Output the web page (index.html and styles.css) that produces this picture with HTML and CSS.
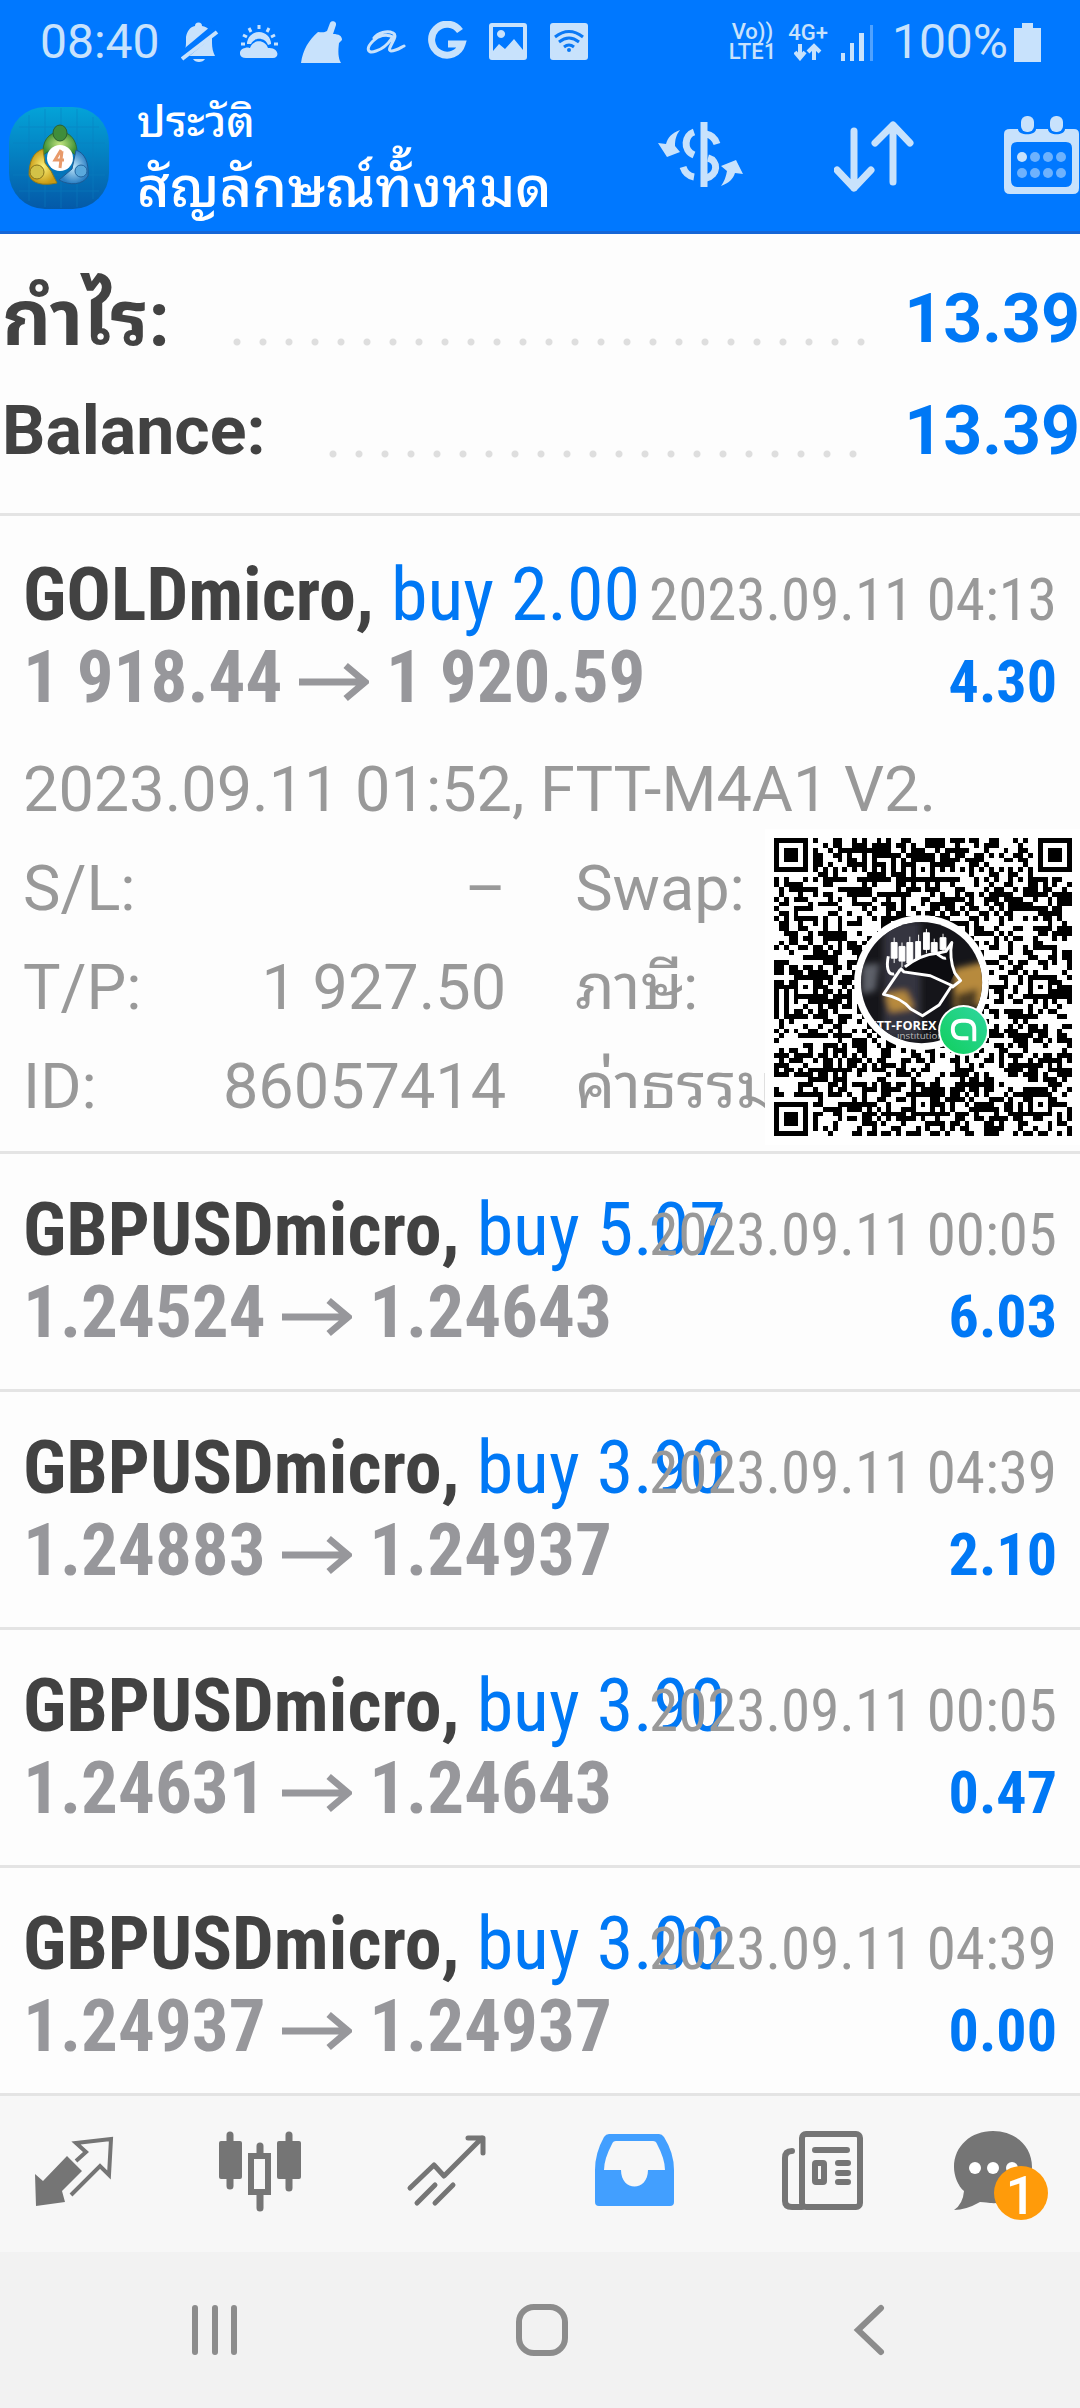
FILE: index.html
```html
<!DOCTYPE html>
<html lang="th">
<head>
<meta charset="utf-8">
<meta name="viewport" content="width=device-width, initial-scale=1">
<title>ประวัติ</title>
<link rel="stylesheet" href="styles.css">
</head>
<body>
<div class="app">
  <header class="top">
    <div class="status">
      <div class="status-left">
        <span class="clock">08:40</span>
        <svg width="38" height="42" viewBox="182 20 38 42" aria-hidden="true"><path fill="currentColor" d="M196 25a3 3 0 0 1 7 0c6 1 9 5 10 10v7c0 5 1 9 3 13h-33c3-5 4-9 4-13v-6c1-6 4-10 9-11zM194 58h12c-2 4-10 4-12 0z"/><path stroke="#0078ff" stroke-width="9" d="M182 56l36-30"/><path stroke="currentColor" stroke-width="4" d="M183 58l35-27"/></svg>
        <svg width="40" height="42" viewBox="243 20 40 42" aria-hidden="true"><g fill="none" stroke="currentColor" stroke-width="3"><path d="M262 24v4M252 27l2 4M272 27l-2 4M246 34l4 2M278 34l-4 2M244 43h4M277 43h4"/></g><path fill="currentColor" d="M250 43a12 12 0 0 1 24 0l-3 1c-3-8-14-8-17-1zM249 57c-8 0-8-9-1-10 3-1 4 0 5 0 3-9 15-9 18 0 11-1 12 10 5 10z"/></svg>
        <svg width="42" height="44" viewBox="304 19 42 44" aria-hidden="true"><path fill="currentColor" d="M333 22c1-3 7-2 6 2l-3 9c6 0 9 2 9 6l-3 3c-1 8-1 15 2 20h-40c2-14 8-23 17-31 3 0 6 1 9-1z"/></svg>
        <svg width="42" height="42" viewBox="362 20 42 42" aria-hidden="true"><path fill="none" stroke="currentColor" stroke-width="3" stroke-linecap="round" d="M372 37c4-5 13-8 19-5 7 3-8 17-2 18 5 0 9-3 13-5M391 36c-7-4-15-1-20 4-8 8-5 13 3 10 7-2 12-7 16-13"/></svg>
        <svg width="40" height="42" viewBox="427 20 40 42" aria-hidden="true"><path fill="none" stroke="currentColor" stroke-width="7" d="M460 30a15.500 15.500 0 1 0 2 13h-14"/></svg>
        <svg width="40" height="42" viewBox="489 20 40 42" aria-hidden="true"><path fill="currentColor" fill-rule="evenodd" d="M493 22h32q3 0 3 3v31q0 3-3 3h-32q-3 0-3-3V25q0-3 3-3zM494 26v24l6-7 6 5 9-10 9 11V26zM502 29a4 4 0 1 0 .1 0z"/></svg>
        <svg width="40" height="42" viewBox="550 20 40 42" aria-hidden="true"><rect x="551" y="22" width="38" height="37" rx="3" fill="currentColor"/><g fill="none" stroke="#0a79f5" stroke-width="3"><path d="M556 36q14-11 28 0M560 41q10-8 20 0M565 46q5-4 10 0"/></g><circle cx="570" cy="49" r="2" fill="#0a79f5"/></svg>
      </div>
      <div class="status-right">
        <span class="mini"><span>Vo))</span><span>LTE1</span></span>
        <span class="mini"><span>4G+</span>
          <svg width="28" height="18" viewBox="795 45 28 18" aria-hidden="true"><path fill="none" stroke="currentColor" stroke-width="4" d="M801 46v13M796 54l5 6 5-6M815 62V49M809 54l6-6 6 6"/></svg>
        </span>
        <svg width="36" height="40" viewBox="841 21 36 40" aria-hidden="true"><g fill="currentColor"><path d="M842 52h4v8h-4zM851 42h4v18h-4zM860 32h5v28h-5z"/><path opacity=".4" d="M871 24h3v36h-3z"/></g></svg>
        <span class="percent">100%</span>
        <svg class="battery" width="28" height="40" viewBox="1015 20 28 40" aria-hidden="true"><path fill="currentColor" d="M1023 21h11v5h8v34h-27V26h8z"/></svg>
      </div>
    </div>
    <div class="bar">
      <svg class="logo" width="100" height="102" viewBox="0 0 100 102" role="img" aria-label="MetaTrader 4">
        <defs>
          <linearGradient id="sea" x1="0" y1="0" x2="0" y2="1"><stop offset="0" stop-color="#04a3d8"/><stop offset="1" stop-color="#0459a8"/></linearGradient>
          <radialGradient id="gr"><stop offset="0" stop-color="#c5e582"/><stop offset="1" stop-color="#3c8f32"/></radialGradient>
          <radialGradient id="ye"><stop offset="0" stop-color="#fdf37a"/><stop offset="1" stop-color="#c99a14"/></radialGradient>
          <radialGradient id="bl"><stop offset="0" stop-color="#bfe6fa"/><stop offset="1" stop-color="#2a7fc4"/></radialGradient>
        </defs>
        <rect width="100" height="102" rx="36" fill="url(#sea)"/>
        <path d="M10 20h80M4 36h92M2 52h96M4 68h92M10 84h80M20 8v86M36 2v98M52 1v100M68 2v98M84 10v82" stroke="#0b7fbe" stroke-width="1" opacity=".5"/>
        <path fill="url(#gr)" stroke="#2f6d38" d="M51 25c12 0 18 11 17 24L58 42H43l-9 6c-1-13 5-23 17-23z"/>
        <path fill="url(#ye)" stroke="#8d7a1c" d="M34 42c-10 3-14 13-14 26 3 9 14 11 28 8l-6-12-6-8z"/>
        <path fill="url(#bl)" stroke="#1d5a94" d="M67 43c9 3 13 13 12 26-5 9-18 10-29 4l13-11z"/>
        <ellipse cx="51" cy="26" rx="7" ry="8" fill="#3f8d3b" stroke="#2c5f32"/>
        <circle cx="28" cy="65" r="7" fill="#d3c247" stroke="#86741c"/>
        <circle cx="72" cy="64" r="6" fill="#5aa9dc" stroke="#23659f"/>
        <ellipse cx="51" cy="51" rx="13" ry="13" fill="#fff"/>
        <path d="M52 43l-6 10h9M53 44l-2 17" fill="none" stroke="#e89a6a" stroke-width="3"/>
      </svg>
      <div class="titles">
        <span class="sub">ประวัติ</span>
        <h1>สัญลักษณ์ทั้งหมด</h1>
      </div>
      <div class="actions">
        <button type="button" aria-label="Currency">
          <svg width="86" height="80" viewBox="660 114 86 80"><g fill="none" stroke="currentColor" stroke-width="7"><path d="M706 121v65"/><path d="M696 131c-9 3-12 18 0 23M708 133c6 1 9 4 11 10M710 157c11 3 10 17-2 20M685 166c2 6 5 9 11 10"/></g><path fill="currentColor" d="M682 129c-8 3-12 7-14 14l-8-1 9 14 13-5-5-6c0-6 1-11 5-16zM723 185c8-3 12-7 14-13l8 1-7-14-15 6 6 5c-1 6-3 11-6 15z"/></svg>
        </button>
        <button type="button" aria-label="Sort">
          <svg width="80" height="80" viewBox="832 114 80 80"><path fill="none" stroke="currentColor" stroke-width="7" stroke-linecap="round" stroke-linejoin="round" d="M852 130v57M835 169l17 18 17-18M891 181v-57M873 142l18-18 17 18"/></svg>
        </button>
        <button type="button" aria-label="Period">
          <svg width="76" height="80" viewBox="1004 114 76 80"><path fill="currentColor" fill-rule="evenodd" d="M1010 128h8c0 7 18 7 18 0h12c0 7 17 7 17 0h9q5 0 5 5v54q0 6-6 6h-63q-6 0-6-6v-54q0-5 6-5zM1017 141q-6 0-6 6v32q0 7 6 7h49q6 0 6-7v-32q0-6-6-6z"/><g fill="currentColor"><rect x="1021" y="115" width="13" height="16" rx="6"/><rect x="1050" y="115" width="13" height="16" rx="6"/><circle cx="1022" cy="156" r="5"/><g opacity=".55"><circle cx="1035" cy="156" r="5"/><circle cx="1048" cy="156" r="5"/><circle cx="1061" cy="156" r="5"/><circle cx="1022" cy="172" r="5"/><circle cx="1035" cy="172" r="5"/><circle cx="1048" cy="172" r="5"/><circle cx="1061" cy="172" r="5"/></g></g></svg>
        </button>
      </div>
    </div>
  </header>

  <main>
    <dl class="summary">
      <div class="sum-row"><dt class="thai">กำไร:</dt><dd class="dots"></dd><dd>13.39</dd></div>
      <div class="sum-row"><dt>Balance:</dt><dd class="dots"></dd><dd>13.39</dd></div>
    </dl>

    <article class="order open">
      <div class="line"><h2>GOLDmicro, <span class="side">buy 2.00</span></h2><time>2023.09.11 04:13</time></div>
      <div class="line"><span class="prices">1 918.44 <svg class="arrow" viewBox="0 0 72 40" aria-hidden="true"><path d="M0 20h68M48 3l20 17-20 17"/></svg> 1 920.59</span><span class="gain">4.30</span></div>
      <div class="details">
        <p>2023.09.11 01:52, FTT-M4A1 V2.</p>
        <dl class="grid">
          <dt>S/L:</dt><dd>–</dd><dt>Swap:</dt>
          <dt>T/P:</dt><dd>1 927.50</dd><dt>ภาษี:</dt>
          <dt>ID:</dt><dd>86057414</dd><dt>ค่าธรรมเนียม:</dt>
        </dl>
      </div>
      <div class="qr">
        <svg viewBox="0 0 305 305" role="img" aria-label="QR code">
          <defs>
            <clipPath id="disc"><circle cx="151" cy="148" r="62"/></clipPath>
            <linearGradient id="mint" x1="0" x2="1" y1="1" y2="0"><stop offset="0" stop-color="#10cf5c"/><stop offset="1" stop-color="#2fd6a0"/></linearGradient>
            <filter id="soft"><feGaussianBlur stdDeviation="3"/></filter>
          </defs>
          <path id="modules" shape-rendering="crispEdges"/>
          <circle cx="151" cy="148" r="69" fill="#fff"/>
          <g clip-path="url(#disc)">
            <path fill="#15151a" d="M85 80h135v135H85z"/>
            <g filter="url(#soft)">
              <path fill="#34363f" d="M112 85h38v120h-38z"/>
              <path fill="#b78a3c" d="M184 134l34-8v45l-34 4zM113 160l22-4 8 18-24 4z"/>
              <path fill="#4b3a20" d="M186 160l22-6v20h-22z"/>
              <path fill="#5d6069" d="M90 130l18-2-4 28-14 4z"/>
            </g>
            <g stroke="#fff" fill="#fff"><path stroke-width="1" d="M123 102v26M131 107v25M139 101v28M148 99v28M156 93v25M164 103v18M173 98v20"/><path d="M120 107h6v16h-6zM128 111h6v15h-6zM136 107h6v21h-6zM145 106h5v20h-5zM153 97h6v17h-6zM161 107h6v10h-6zM170 102h6v12h-6z"/></g>
            <path fill="#0c0c10" d="M134 132c10-8 21-13 33-14l9-2 6-9c-2 9-1 22 3 31l-6 12-22-9-27-4z"/>
            <path fill="none" stroke="#fff" stroke-width="3" stroke-linejoin="round" d="M117 121c-2 10-1 20 6 18M129 135l-17 25c12 2 22 8 28 15l12 7 17-11 13-20-22-10-27-4-4-4M134 132c10-8 21-13 33-14l9-2 6-9c-2 9-1 22 3 31l6 8-9 7M167 119c4 2 6 5 9 4"/>
            <text x="98" y="196" class="brand">FTT-FOREX</text>
            <text x="126" y="206" class="brand small">ınstıtution</text>
          </g>
          <circle cx="194" cy="197" r="26" fill="#fff"/>
          <circle cx="194" cy="197" r="24" fill="url(#mint)"/>
          <path fill="none" stroke="#fff" stroke-width="4" d="M205 208v-12q0-9-9-9h-4q-9 0-9 9t9 9h7"/>
        </svg>
      </div>
    </article>

    <article class="order">
      <div class="line"><h2>GBPUSDmicro, <span class="side">buy 5.07</span></h2><time>2023.09.11 00:05</time></div>
      <div class="line"><span class="prices">1.24524 <svg class="arrow" viewBox="0 0 72 40" aria-hidden="true"><path d="M0 20h68M48 3l20 17-20 17"/></svg> 1.24643</span><span class="gain">6.03</span></div>
    </article>
    <article class="order">
      <div class="line"><h2>GBPUSDmicro, <span class="side">buy 3.90</span></h2><time>2023.09.11 04:39</time></div>
      <div class="line"><span class="prices">1.24883 <svg class="arrow" viewBox="0 0 72 40" aria-hidden="true"><path d="M0 20h68M48 3l20 17-20 17"/></svg> 1.24937</span><span class="gain">2.10</span></div>
    </article>
    <article class="order">
      <div class="line"><h2>GBPUSDmicro, <span class="side">buy 3.90</span></h2><time>2023.09.11 00:05</time></div>
      <div class="line"><span class="prices">1.24631 <svg class="arrow" viewBox="0 0 72 40" aria-hidden="true"><path d="M0 20h68M48 3l20 17-20 17"/></svg> 1.24643</span><span class="gain">0.47</span></div>
    </article>
    <article class="order">
      <div class="line"><h2>GBPUSDmicro, <span class="side">buy 3.00</span></h2><time>2023.09.11 04:39</time></div>
      <div class="line"><span class="prices">1.24937 <svg class="arrow" viewBox="0 0 72 40" aria-hidden="true"><path d="M0 20h68M48 3l20 17-20 17"/></svg> 1.24937</span><span class="gain">0.00</span></div>
    </article>
  </main>

  <nav class="tabs" aria-label="Sections">
    <a href="#quotes" aria-label="Quotes"><svg width="82" height="84" viewBox="33 2130 82 84"><path fill="currentColor" d="M67 2156l15 15-20 20 3 11-29 4-1-32 8 7z"/><path fill="none" stroke="currentColor" stroke-width="4" d="M76 2161l10-9-10-9 35-4-2 36-9-9-29 29"/></svg></a>
    <a href="#charts" aria-label="Charts"><svg width="84" height="84" viewBox="218 2130 84 84"><g stroke="currentColor" stroke-width="7" stroke-linecap="round"><path d="M230 2135v51M289 2135v53M260 2146v10M260 2192v16"/></g><g fill="currentColor"><rect x="219" y="2141" width="23" height="38" rx="2"/><rect x="277" y="2141" width="24" height="38" rx="2"/></g><rect x="251" y="2156" width="17" height="36" fill="#f7f7f7" stroke="currentColor" stroke-width="6"/></svg></a>
    <a href="#trade" aria-label="Trade"><svg width="82" height="84" viewBox="406 2130 82 84"><path fill="none" stroke="currentColor" stroke-width="5" stroke-linecap="round" stroke-linejoin="round" d="M410 2188l24-23 10 11 38-38M468 2138h15v15M417 2203l18-18M435 2203l18-18"/></svg></a>
    <a href="#history" class="active" aria-label="History" aria-current="page"><svg width="82" height="84" viewBox="593 2130 82 84"><path fill="currentColor" fill-rule="evenodd" d="M608 2134h50q3 0 5 3 10 16 10 33v32q0 4-4 4h-71q-4 0-4-4v-32q0-17 9-33 2-3 5-3zM603 2170h17c0 22 27 22 27 0h17q0-11-8-26-1-3-4-3h-37q-3 0-4 3-8 15-8 26z"/></svg></a>
    <a href="#news" aria-label="News"><svg width="84" height="84" viewBox="780 2130 84 84"><g fill="none" stroke="currentColor" stroke-width="6" stroke-linecap="round"><rect x="801" y="2134" width="58" height="73" rx="4"/><path d="M791 2151q-7 0-7 7v43q0 6 7 6h10M814 2150h32M837 2163h10M837 2173h10M837 2182h10"/><rect x="814" y="2163" width="9" height="19" rx="1"/></g></svg></a>
    <a href="#mail" class="mail" aria-label="Messages, 1 new"><svg width="82" height="84" viewBox="952 2130 82 84"><path fill="currentColor" d="M993 2131c22 0 39 15 39 36s-19 38-42 36q-8-1-10-1-14 8-26 8 9-6 10-19c-6-5-10-15-10-24 0-21 17-36 39-36z"/><g fill="#fff"><circle cx="975" cy="2168" r="6"/><circle cx="993" cy="2168" r="6"/><circle cx="1012" cy="2168" r="6"/></g></svg><span class="badge">1</span></a>
  </nav>

  <nav class="system" aria-label="System">
    <button type="button" aria-label="Recent apps"><svg width="52" height="52" viewBox="0 0 52 52"><path d="M6 4v44M26 4v44M45 4v44"/></svg></button>
    <button type="button" aria-label="Home"><svg width="56" height="56" viewBox="0 0 56 56"><rect x="5" y="5" width="46" height="46" rx="15"/></svg></button>
    <button type="button" aria-label="Back"><svg width="52" height="52" viewBox="0 0 52 52"><path d="M38 4L15 26l23 22"/></svg></button>
  </nav>
</div>
<script src="qr.js"></script>
</body>
</html>
```
FILE: styles.css
```css
* { box-sizing: border-box; }

body {
  margin: 0;
  background: #fdfdfd;
  color: #424242;
  font-family: Roboto, "Noto Sans Thai Looped", Loma, Waree, "Noto Sans Thai", sans-serif;
}

h1, h2, p, dl, dd { margin: 0; }

button {
  display: flex;
  padding: 0;
  border: 0;
  background: none;
  color: inherit;
}

svg { display: block; flex: none; }

.app {
  display: flex;
  flex-direction: column;
  min-height: 100vh;
}

/* Status bar and title bar */
.top {
  background: #0078ff;
  border-bottom: 3px solid #1566d6;
  color: #c8e2fc;
}

.status {
  display: flex;
  justify-content: space-between;
  align-items: center;
  height: 84px;
  padding: 0 38px 0 40px;
}

.status-left { display: flex; align-items: center; gap: 21px; }
.status-right { display: flex; align-items: center; gap: 12px; }
.clock { font-size: 48px; line-height: 56px; }
.percent { font-size: 48px; line-height: 56px; margin-left: 4px; }
.battery { margin-left: -6px; }

.mini {
  display: flex;
  flex-direction: column;
  align-items: center;
  font-size: 22px;
  line-height: 20px;
  font-weight: 500;
}

.bar {
  display: flex;
  align-items: center;
  height: 147px;
  padding-left: 9px;
}

.titles {
  display: flex;
  flex-direction: column;
  margin-left: 28px;
  color: #fff;
}

.sub { font-size: 44px; line-height: 60px; font-weight: 500; white-space: nowrap; }
h1 { font-size: 56px; line-height: 72px; font-weight: 500; white-space: nowrap; }

.actions { display: flex; gap: 90px; margin: 0 0 6px auto; }

/* Totals */
.summary { padding: 29px 0 26px; border-bottom: 3px solid #e4e4e4; }

.sum-row {
  display: flex;
  align-items: center;
  height: 112px;
  font-size: 68px;
  line-height: 112px;
  font-weight: 700;
}

.sum-row dt { padding-left: 2px; white-space: nowrap; }
.sum-row .thai { font-size: 76px; line-height: 106px; }
.sum-row dd:last-child { color: #0078f5; }

.dots {
  flex: 1;
  height: 8px;
  margin: 46px 36px 0 54px;
  background: radial-gradient(circle at center, #dedede 3px, transparent 4px) 0 0 / 26px 8px repeat-x;
}

/* Orders */
.order {
  position: relative;
  padding: 35px 23px 36px;
  border-bottom: 3px solid #e4e4e4;
}

.open { padding: 38px 23px 15px; }
.order:last-child { border-bottom: 0; padding-bottom: 26px; }

/* Both ends of a line share one cell, so a long symbol runs under the date */
.line {
  display: grid;
  grid-template-columns: 1fr;
  grid-template-rows: 82px;
  align-items: baseline;
  font-family: "Roboto Condensed", "Liberation Sans Narrow", Roboto, sans-serif;
  line-height: 72px;
  white-space: nowrap;
}

.line > * { grid-area: 1 / 1; }

h2 { font-size: 74px; line-height: 82px; font-weight: 700; }
.side { color: #0078f5; font-weight: 400; }
time, .gain { justify-self: end; }
time { color: #999; font-size: 59px; }
.prices { color: #97979b; font-size: 73px; line-height: 82px; font-weight: 700; }
.gain { color: #0078f5; font-size: 60px; font-weight: 700; }

.arrow {
  display: inline-block;
  width: 70px;
  height: 40px;
  fill: none;
  stroke: currentColor;
  stroke-width: 7px;
}

.details {
  margin-top: 22px;
  color: #999;
  font-size: 63px;
  line-height: 99px;
  white-space: nowrap;
}

.grid {
  display: grid;
  grid-template-columns: 200fr 283fr 69fr 482fr;
  grid-auto-rows: 99px;
  overflow: hidden;
}

.grid dt:nth-of-type(odd) { grid-column: 1; }
.grid dt:nth-of-type(even) { grid-column: 4; }
.grid dd { grid-column: 2; text-align: right; }

.qr {
  position: absolute;
  right: 0;
  bottom: 6px;
  width: 315px;
  padding: 9px 8px 9px 9px;
  background: #fff;
}

.brand { font: 700 13px "Open Sans", sans-serif; fill: #fff; }
.small { font-size: 10px; font-weight: 400; fill: #bbb; }

/* Tab bar */
.tabs {
  display: grid;
  grid-template-columns: 185fr 188fr 187fr 187fr 171fr 128fr;
  align-items: start;
  height: 159px;
  margin-top: auto;
  padding: 34px 0 0 33px;
  background: #f7f7f7;
  border-top: 3px solid #e4e4e4;
}

.tabs a { display: flex; color: #757575; }
.tabs .active { color: #429fff; }
.mail { position: relative; }

.badge {
  position: absolute;
  left: 42px;
  top: 36px;
  width: 54px;
  height: 54px;
  border-radius: 50%;
  background: #ff9b0a;
  color: #fff;
  font-size: 54px;
  line-height: 60px;
  font-weight: 500;
  text-align: center;
}

/* System navigation */
.system {
  display: grid;
  grid-template-columns: repeat(3, 1fr);
  place-items: center;
  height: 156px;
  padding: 0 48px 0 52px;
  background: #f2f2f2;
  color: #8c8c8c;
}

.system svg {
  fill: none;
  stroke: currentColor;
  stroke-width: 6px;
  stroke-linecap: round;
}
```
FILE: qr.js
```js
// Fills the QR code: finder, timing and alignment patterns, then the data field.
(function () {
  var n = 61, size = 5, seed = 20230911, d = "";
  function rnd() {
    seed = (seed * 1103515245 + 12345) % 2147483648;
    return seed / 2147483648;
  }
  function ring(x, y, cx, cy, r) {
    var k = Math.max(Math.abs(x - cx), Math.abs(y - cy));
    return k > r ? -1 : k;
  }
  for (var y = 0; y < n; y++) {
    for (var x = 0; x < n; x++) {
      var on = rnd() < 0.5, k;
      if (x === 6 || y === 6) on = (x + y) % 2 === 0;
      [[3, 3], [n - 4, 3], [3, n - 4]].forEach(function (c) {
        k = ring(x, y, c[0], c[1], 4);
        if (k >= 0) on = k < 2 || k === 3;
      });
      [[30, 6], [54, 30], [6, 30], [30, 54], [54, 54]].forEach(function (c) {
        k = ring(x, y, c[0], c[1], 2);
        if (k >= 0) on = k !== 1;
      });
      if (on) d += "M" + x * size + " " + y * size + "h5v5h-5z";
    }
  }
  document.getElementById("modules").setAttribute("d", d);
})();
```
